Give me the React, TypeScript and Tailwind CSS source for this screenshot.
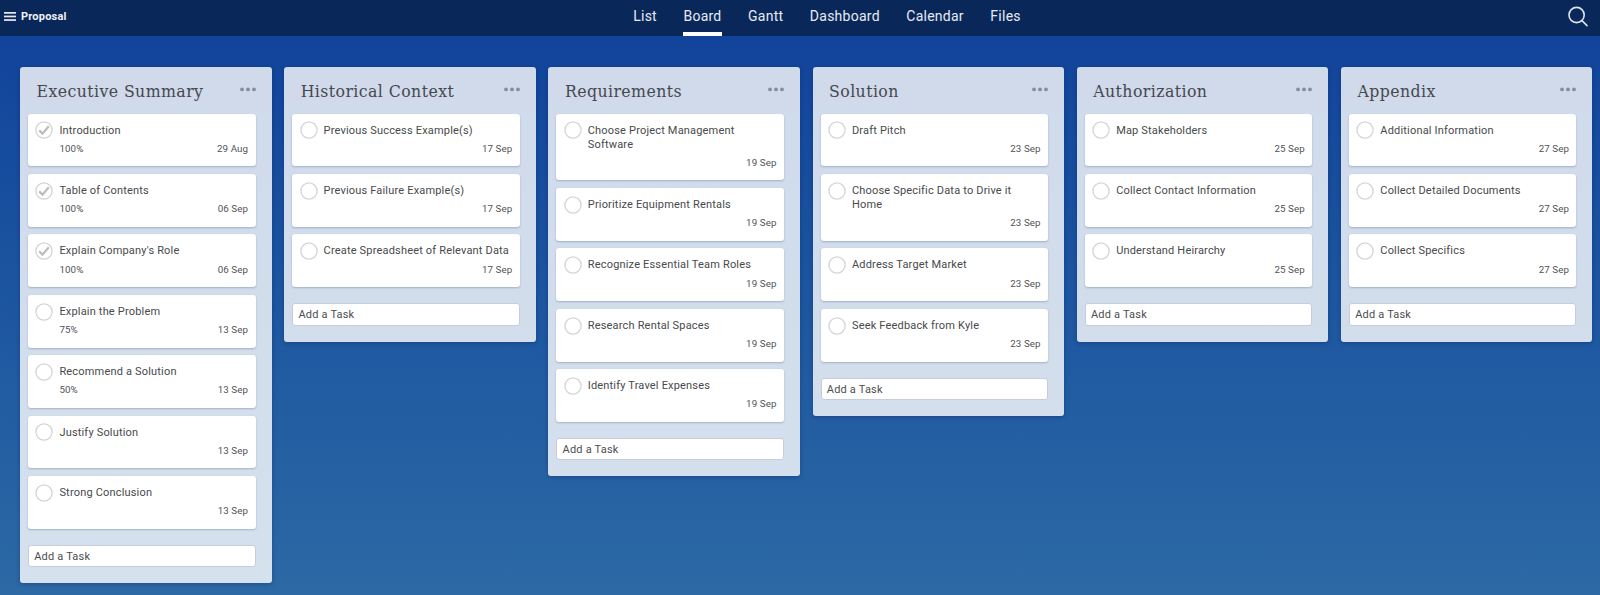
type Task = { title: string; date: string; percent?: string };
type Column = { title: string; tasks: Task[] };

const t = (title: string, date: string, percent?: string): Task => ({ title, date, percent });

const columns: Column[] = [
  {
    title: "Executive Summary",
    tasks: [
      t("Introduction", "29 Aug", "100%"),
      t("Table of Contents", "06 Sep", "100%"),
      t("Explain Company's Role", "06 Sep", "100%"),
      t("Explain the Problem", "13 Sep", "75%"),
      t("Recommend a Solution", "13 Sep", "50%"),
      t("Justify Solution", "13 Sep"),
      t("Strong Conclusion", "13 Sep"),
    ],
  },
  {
    title: "Historical Context",
    tasks: [
      t("Previous Success Example(s)", "17 Sep"),
      t("Previous Failure Example(s)", "17 Sep"),
      t("Create Spreadsheet of Relevant Data", "17 Sep"),
    ],
  },
  {
    title: "Requirements",
    tasks: [
      t("Choose Project Management Software", "19 Sep"),
      t("Prioritize Equipment Rentals", "19 Sep"),
      t("Recognize Essential Team Roles", "19 Sep"),
      t("Research Rental Spaces", "19 Sep"),
      t("Identify Travel Expenses", "19 Sep"),
    ],
  },
  {
    title: "Solution",
    tasks: [
      t("Draft Pitch", "23 Sep"),
      t("Choose Specific Data to Drive it Home", "23 Sep"),
      t("Address Target Market", "23 Sep"),
      t("Seek Feedback from Kyle", "23 Sep"),
    ],
  },
  {
    title: "Authorization",
    tasks: [
      t("Map Stakeholders", "25 Sep"),
      t("Collect Contact Information", "25 Sep"),
      t("Understand Heirarchy", "25 Sep"),
    ],
  },
  {
    title: "Appendix",
    tasks: [
      t("Additional Information", "27 Sep"),
      t("Collect Detailed Documents", "27 Sep"),
      t("Collect Specifics", "27 Sep"),
    ],
  },
];

const tabs = ["List", "Board", "Gantt", "Dashboard", "Calendar", "Files"];

function Header() {
  return (
    <header className="grid h-[35.7px] grid-cols-[1fr_auto_1fr] bg-[#0a2759]">
      <div className="flex h-[33px] items-center gap-[5px] pl-1">
        <svg width="12" height="9" viewBox="0 0 12 9" fill="#e6ebf3">
          <rect y="0" width="12" height="1.7" />
          <rect y="3.6" width="12" height="1.7" />
          <rect y="7.2" width="12" height="1.7" />
        </svg>
        <span className="text-[11px] leading-[17px] font-bold tracking-[0.2px] text-[#eef2f8]">Proposal</span>
      </div>
      <nav className="flex gap-[26.5px] pl-[54px]">
        {tabs.map((tab) => (
          <a
            key={tab}
            className={
              tab === "Board"
                ? "h-full border-b-4 border-white text-[14px] leading-8 tracking-[0.25px] text-[#e6ecf5]"
                : "h-full text-[14px] leading-8 tracking-[0.25px] text-[#e6ecf5]"
            }
          >
            {tab}
          </a>
        ))}
      </nav>
      <div className="flex justify-end pt-[5.5px] pr-3">
        <svg width="20" height="21" viewBox="0 0 20 21" fill="none" stroke="#dbe4f1" strokeWidth="1.6" strokeLinecap="round">
          <circle cx="8.6" cy="9" r="7.6" />
          <path d="M14 14.6 19 19.6" />
        </svg>
      </div>
    </header>
  );
}

function Check({ done }: { done: boolean }) {
  return (
    <svg className="mt-[7.8px] shrink-0" width="18" height="18" viewBox="0 0 18 18" fill="none">
      <circle cx="9" cy="9" r="8.1" stroke="#d4d4d6" strokeWidth="1.3" />
      {done && <path d="M4.2 9.4 7.5 12.6 13.8 5.2" stroke="#bcbcbf" strokeWidth="2.2" />}
    </svg>
  );
}

function Card({ task }: { task: Task }) {
  return (
    <div className="flex rounded-[3px] bg-white pl-[7.4px] shadow-[0_1px_2px_rgba(40,60,100,0.28)]">
      <Check done={task.percent === "100%"} />
      <div className="flex-1 pt-[10px] pb-[9.4px] pl-1.5">
        <div className="pr-1.5 text-[11px] leading-[14px] tracking-[0.18px] text-[#47494c]">{task.title}</div>
        <div className="mt-[3.3px] flex h-4 justify-between pr-[7.4px] text-[9.75px] leading-4 tracking-[0.1px] text-[#505255]">
          <span>{task.percent}</span>
          <span>{task.date}</span>
        </div>
      </div>
    </div>
  );
}

function BoardColumn({ column }: { column: Column }) {
  return (
    <section className="w-[251.5px] shrink-0 rounded-[3px] bg-white/80 pr-4 pb-4 pl-2 shadow-[0_1px_4px_rgba(5,30,90,0.35)]">
      <div className="flex h-[46.5px] justify-between pl-[8.5px]">
        <h2 className="font-['DejaVu_Serif_Condensed','DejaVu_Serif',serif] text-[17.5px] leading-[48px] tracking-[0.42px] text-[#45484d]">
          {column.title}
        </h2>
        <svg className="mt-[19.5px]" width="16" height="5" viewBox="0 0 16 5" fill="#868d9a">
          <circle cx="2" cy="2.4" r="1.9" />
          <circle cx="8" cy="2.4" r="1.9" />
          <circle cx="14" cy="2.4" r="1.9" />
        </svg>
      </div>
      <div className="flex flex-col gap-[7.7px]">
        {column.tasks.map((task) => (
          <Card key={task.title} task={task} />
        ))}
      </div>
      <div className="mt-[16.2px] h-[22.4px] rounded-[3px] border border-[#c6cdd8] bg-white pl-[5.2px] text-[11px] leading-[21px] tracking-[0.2px] text-[#4b4d50]">
        Add a Task
      </div>
    </section>
  );
}

export default function App() {
  return (
    <div className="h-[595px] overflow-hidden bg-linear-to-b from-[#10419a] to-[#2c69a5] font-[Roboto,sans-serif]">
      <Header />
      <main className="flex items-start gap-[12.7px] pt-[31.5px] pl-5">
        {columns.map((column) => (
          <BoardColumn key={column.title} column={column} />
        ))}
      </main>
    </div>
  );
}
